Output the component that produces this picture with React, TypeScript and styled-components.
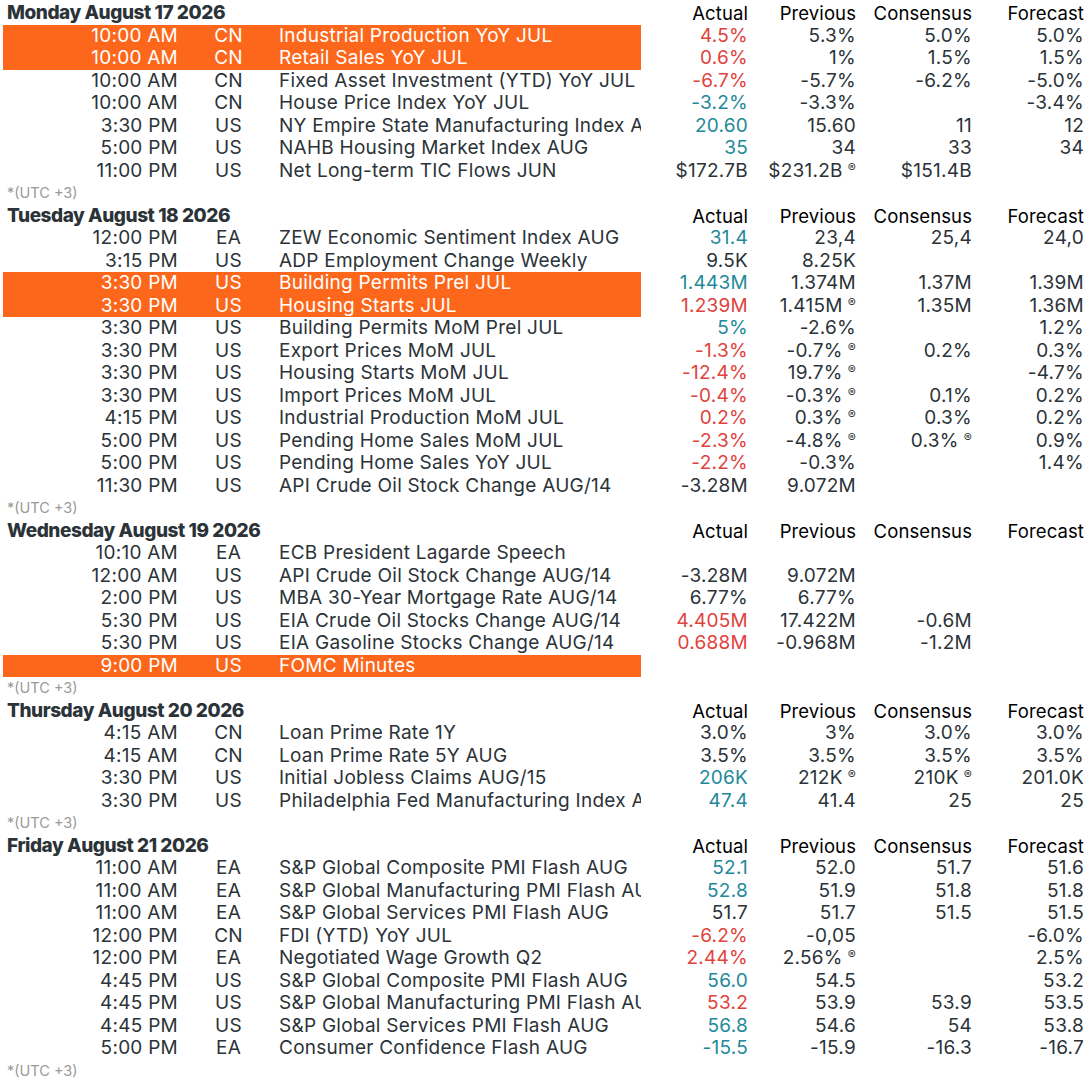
import React from 'react';
import styled, { createGlobalStyle, css } from 'styled-components';

type Tone = 'up' | 'down' | 'plain';

interface Cell {
  v: string;
  r?: boolean;
}

interface Event {
  time: string;
  cc: string;
  name: string;
  actual?: string;
  tone?: Tone;
  prev?: Cell;
  cons?: Cell;
  fcst?: Cell;
  hot?: boolean;
}

interface Day {
  title: string;
  events: Event[];
}

const c = (v: string, r?: boolean): Cell => ({ v, r });

const DAYS: Day[] = [
  {
    title: 'Monday August 17 2026',
    events: [
      { time: '10:00 AM', cc: 'CN', name: 'Industrial Production YoY JUL', actual: '4.5%', tone: 'down', prev: c('5.3%'), cons: c('5.0%'), fcst: c('5.0%'), hot: true },
      { time: '10:00 AM', cc: 'CN', name: 'Retail Sales YoY JUL', actual: '0.6%', tone: 'down', prev: c('1%'), cons: c('1.5%'), fcst: c('1.5%'), hot: true },
      { time: '10:00 AM', cc: 'CN', name: 'Fixed Asset Investment (YTD) YoY JUL', actual: '-6.7%', tone: 'down', prev: c('-5.7%'), cons: c('-6.2%'), fcst: c('-5.0%') },
      { time: '10:00 AM', cc: 'CN', name: 'House Price Index YoY JUL', actual: '-3.2%', tone: 'up', prev: c('-3.3%'), fcst: c('-3.4%') },
      { time: '3:30 PM', cc: 'US', name: 'NY Empire State Manufacturing Index AUG', actual: '20.60', tone: 'up', prev: c('15.60'), cons: c('11'), fcst: c('12') },
      { time: '5:00 PM', cc: 'US', name: 'NAHB Housing Market Index AUG', actual: '35', tone: 'up', prev: c('34'), cons: c('33'), fcst: c('34') },
      { time: '11:00 PM', cc: 'US', name: 'Net Long-term TIC Flows JUN', actual: '$172.7B', prev: c('$231.2B', true), cons: c('$151.4B') },
    ],
  },
  {
    title: 'Tuesday August 18 2026',
    events: [
      { time: '12:00 PM', cc: 'EA', name: 'ZEW Economic Sentiment Index AUG', actual: '31.4', tone: 'up', prev: c('23,4'), cons: c('25,4'), fcst: c('24,0') },
      { time: '3:15 PM', cc: 'US', name: 'ADP Employment Change Weekly', actual: '9.5K', prev: c('8.25K') },
      { time: '3:30 PM', cc: 'US', name: 'Building Permits Prel JUL', actual: '1.443M', tone: 'up', prev: c('1.374M'), cons: c('1.37M'), fcst: c('1.39M'), hot: true },
      { time: '3:30 PM', cc: 'US', name: 'Housing Starts JUL', actual: '1.239M', tone: 'down', prev: c('1.415M', true), cons: c('1.35M'), fcst: c('1.36M'), hot: true },
      { time: '3:30 PM', cc: 'US', name: 'Building Permits MoM Prel JUL', actual: '5%', tone: 'up', prev: c('-2.6%'), fcst: c('1.2%') },
      { time: '3:30 PM', cc: 'US', name: 'Export Prices MoM JUL', actual: '-1.3%', tone: 'down', prev: c('-0.7%', true), cons: c('0.2%'), fcst: c('0.3%') },
      { time: '3:30 PM', cc: 'US', name: 'Housing Starts MoM JUL', actual: '-12.4%', tone: 'down', prev: c('19.7%', true), fcst: c('-4.7%') },
      { time: '3:30 PM', cc: 'US', name: 'Import Prices MoM JUL', actual: '-0.4%', tone: 'down', prev: c('-0.3%', true), cons: c('0.1%'), fcst: c('0.2%') },
      { time: '4:15 PM', cc: 'US', name: 'Industrial Production MoM JUL', actual: '0.2%', tone: 'down', prev: c('0.3%', true), cons: c('0.3%'), fcst: c('0.2%') },
      { time: '5:00 PM', cc: 'US', name: 'Pending Home Sales MoM JUL', actual: '-2.3%', tone: 'down', prev: c('-4.8%', true), cons: c('0.3%', true), fcst: c('0.9%') },
      { time: '5:00 PM', cc: 'US', name: 'Pending Home Sales YoY JUL', actual: '-2.2%', tone: 'down', prev: c('-0.3%'), fcst: c('1.4%') },
      { time: '11:30 PM', cc: 'US', name: 'API Crude Oil Stock Change AUG/14', actual: '-3.28M', prev: c('9.072M') },
    ],
  },
  {
    title: 'Wednesday August 19 2026',
    events: [
      { time: '10:10 AM', cc: 'EA', name: 'ECB President Lagarde Speech' },
      { time: '12:00 AM', cc: 'US', name: 'API Crude Oil Stock Change AUG/14', actual: '-3.28M', prev: c('9.072M') },
      { time: '2:00 PM', cc: 'US', name: 'MBA 30-Year Mortgage Rate AUG/14', actual: '6.77%', prev: c('6.77%') },
      { time: '5:30 PM', cc: 'US', name: 'EIA Crude Oil Stocks Change AUG/14', actual: '4.405M', tone: 'down', prev: c('17.422M'), cons: c('-0.6M') },
      { time: '5:30 PM', cc: 'US', name: 'EIA Gasoline Stocks Change AUG/14', actual: '0.688M', tone: 'down', prev: c('-0.968M'), cons: c('-1.2M') },
      { time: '9:00 PM', cc: 'US', name: 'FOMC Minutes', hot: true },
    ],
  },
  {
    title: 'Thursday August 20 2026',
    events: [
      { time: '4:15 AM', cc: 'CN', name: 'Loan Prime Rate 1Y', actual: '3.0%', prev: c('3%'), cons: c('3.0%'), fcst: c('3.0%') },
      { time: '4:15 AM', cc: 'CN', name: 'Loan Prime Rate 5Y AUG', actual: '3.5%', prev: c('3.5%'), cons: c('3.5%'), fcst: c('3.5%') },
      { time: '3:30 PM', cc: 'US', name: 'Initial Jobless Claims AUG/15', actual: '206K', tone: 'up', prev: c('212K', true), cons: c('210K', true), fcst: c('201.0K') },
      { time: '3:30 PM', cc: 'US', name: 'Philadelphia Fed Manufacturing Index AUG', actual: '47.4', tone: 'up', prev: c('41.4'), cons: c('25'), fcst: c('25') },
    ],
  },
  {
    title: 'Friday August 21 2026',
    events: [
      { time: '11:00 AM', cc: 'EA', name: 'S&P Global Composite PMI Flash AUG', actual: '52.1', tone: 'up', prev: c('52.0'), cons: c('51.7'), fcst: c('51.6') },
      { time: '11:00 AM', cc: 'EA', name: 'S&P Global Manufacturing PMI Flash AUG', actual: '52.8', tone: 'up', prev: c('51.9'), cons: c('51.8'), fcst: c('51.8') },
      { time: '11:00 AM', cc: 'EA', name: 'S&P Global Services PMI Flash AUG', actual: '51.7', prev: c('51.7'), cons: c('51.5'), fcst: c('51.5') },
      { time: '12:00 PM', cc: 'CN', name: 'FDI (YTD) YoY JUL', actual: '-6.2%', tone: 'down', prev: c('-0,05'), fcst: c('-6.0%') },
      { time: '12:00 PM', cc: 'EA', name: 'Negotiated Wage Growth Q2', actual: '2.44%', tone: 'down', prev: c('2.56%', true), fcst: c('2.5%') },
      { time: '4:45 PM', cc: 'US', name: 'S&P Global Composite PMI Flash AUG', actual: '56.0', tone: 'up', prev: c('54.5'), fcst: c('53.2') },
      { time: '4:45 PM', cc: 'US', name: 'S&P Global Manufacturing PMI Flash AUG', actual: '53.2', tone: 'down', prev: c('53.9'), cons: c('53.9'), fcst: c('53.5') },
      { time: '4:45 PM', cc: 'US', name: 'S&P Global Services PMI Flash AUG', actual: '56.8', tone: 'up', prev: c('54.6'), cons: c('54'), fcst: c('53.8') },
      { time: '5:00 PM', cc: 'EA', name: 'Consumer Confidence Flash AUG', actual: '-15.5', tone: 'up', prev: c('-15.9'), cons: c('-16.3'), fcst: c('-16.7') },
    ],
  },
];

const INK = '#2b3338';
const ORANGE = '#fd671c';
const TONES: Record<Tone, string> = {
  up: '#23899a',
  down: '#e0423c',
  plain: INK,
};

const GlobalStyle = createGlobalStyle`
  html, body {
    margin: 0;
    padding: 0;
    background: #fff;
  }
  body {
    font-family: Inter, "Noto Sans", sans-serif;
    color: ${INK};
    -webkit-font-smoothing: antialiased;
  }
`;

const Page = styled.div`
  width: 1092px;
  padding-top: 2px;
`;

// shared column template: main block (time/country/event) then four value columns
const grid = css`
  display: grid;
  grid-template-columns: 638px 107px 108px 116px 112px;
  height: 22.5px;
  line-height: 22.5px;
  margin-left: 3px;
`;

const HeaderRow = styled.div`
  ${grid}
`;

const DayTitle = styled.div`
  padding-left: 4px;
  font-weight: 800;
  font-size: 19px;
  letter-spacing: -0.45px;
  white-space: nowrap;
`;

const ColLabel = styled.div`
  text-align: right;
  font-size: 18.5px;
  letter-spacing: 0.1px;
  color: #000;
  white-space: nowrap;
`;

const Row = styled.div`
  ${grid}
  font-size: 19px;
  letter-spacing: 0.25px;
`;

const Main = styled.div<{ $hot?: boolean }>`
  display: grid;
  grid-template-columns: 175px 101px 1fr;
  background: ${p => (p.$hot ? ORANGE : 'transparent')};
  color: ${p => (p.$hot ? '#fff' : INK)};
  overflow: hidden;
`;

const Time = styled.span`
  text-align: right;
  white-space: nowrap;
`;

const Country = styled.span`
  text-align: center;
`;

const Name = styled.span`
  white-space: nowrap;
  overflow: hidden;
`;

const Value = styled.span<{ $tone?: Tone }>`
  text-align: right;
  white-space: nowrap;
  color: ${p => TONES[p.$tone ?? 'plain']};
`;

const Revised = styled.sup`
  font-size: 12px;
  margin-left: 5px;
  vertical-align: 5px;
  line-height: 0;
`;

const Note = styled.div`
  height: 22.5px;
  line-height: 22.5px;
  padding-left: 7px;
  font-size: 14.5px;
  color: #9a9a9a;
`;

const ValueCell = ({ cell }: { cell?: Cell }) => (
  <Value>
    {cell?.v}
    {cell?.r && <Revised>®</Revised>}
  </Value>
);

const DayBlock = ({ day }: { day: Day }) => (
  <section>
    <HeaderRow>
      <DayTitle>{day.title}</DayTitle>
      <ColLabel>Actual</ColLabel>
      <ColLabel>Previous</ColLabel>
      <ColLabel>Consensus</ColLabel>
      <ColLabel>Forecast</ColLabel>
    </HeaderRow>
    {day.events.map((e, i) => (
      <Row key={i}>
        <Main $hot={e.hot}>
          <Time>{e.time}</Time>
          <Country>{e.cc}</Country>
          <Name>{e.name}</Name>
        </Main>
        <Value $tone={e.tone}>{e.actual}</Value>
        <ValueCell cell={e.prev} />
        <ValueCell cell={e.cons} />
        <ValueCell cell={e.fcst} />
      </Row>
    ))}
    <Note>*(UTC +3)</Note>
  </section>
);

export default function App() {
  return (
    <>
      <GlobalStyle />
      <Page>
        {DAYS.map(d => (
          <DayBlock key={d.title} day={d} />
        ))}
      </Page>
    </>
  );
}
